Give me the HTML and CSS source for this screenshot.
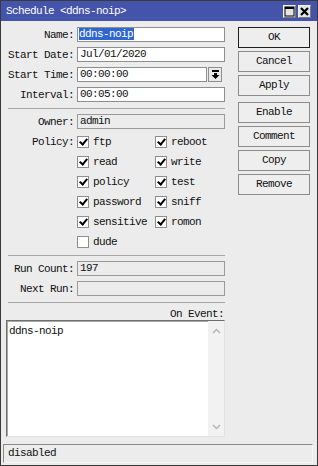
FILE: index.html
```html
<html>
    <head>
        <title>Schedule &lt;ddns-noip&gt;</title>
        <meta charset="UTF-8" />
        <link rel="stylesheet" href="styles.css">
    </head>
    <body>
        <div class="window">
            <div class="titlebar">
                <span class="title">Schedule &lt;ddns-noip&gt;</span>
                <span class="tbtn">
                    <svg width="11" height="11" viewBox="0 0 11 11">
                        <rect x="1" y="1" width="9" height="9" fill="none" stroke="#000" stroke-width="1"/>
                        <rect x="1" y="1" width="9" height="2" fill="#000"/>
                    </svg>
                </span>
                <span class="tbtn">
                    <svg width="11" height="11" viewBox="0 0 11 11">
                        <path d="M2 2 L9 9 M9 2 L2 9" stroke="#000" stroke-width="2.2"/>
                    </svg>
                </span>
            </div>

            <div class="content">
                <div class="form">
                    <div class="row">
                        <div class="label">Name:</div>
                        <div class="field"><span class="sel">ddns-noip</span></div>
                    </div>
                    <div class="row">
                        <div class="label">Start Date:</div>
                        <div class="field">Jul/01/2020</div>
                    </div>
                    <div class="row">
                        <div class="label">Start Time:</div>
                        <div class="field short">00:00:00</div>
                        <div class="drop">
                            <svg width="9" height="9" viewBox="0 0 9 9">
                                <rect x="1" y="0" width="7" height="2" fill="#000"/>
                                <rect x="3" y="3" width="3" height="2" fill="#000"/>
                                <polygon points="0.5,5 8.5,5 4.5,9" fill="#000"/>
                            </svg>
                        </div>
                    </div>
                    <div class="row">
                        <div class="label">Interval:</div>
                        <div class="field">00:05:00</div>
                    </div>

                    <div class="sep"></div>

                    <div class="row">
                        <div class="label">Owner:</div>
                        <div class="field ro">admin</div>
                    </div>
                    <div class="row policy">
                        <div class="label">Policy:</div>
                        <div class="checks">
                            <div class="check"><span class="box on"></span>ftp</div>
                            <div class="check"><span class="box on"></span>reboot</div>
                            <div class="check"><span class="box on"></span>read</div>
                            <div class="check"><span class="box on"></span>write</div>
                            <div class="check"><span class="box on"></span>policy</div>
                            <div class="check"><span class="box on"></span>test</div>
                            <div class="check"><span class="box on"></span>password</div>
                            <div class="check"><span class="box on"></span>sniff</div>
                            <div class="check"><span class="box on"></span>sensitive</div>
                            <div class="check"><span class="box on"></span>romon</div>
                            <div class="check"><span class="box"></span>dude</div>
                        </div>
                    </div>

                    <div class="sep sep-tight"></div>

                    <div class="row">
                        <div class="label">Run Count:</div>
                        <div class="field ro">197</div>
                    </div>
                    <div class="row">
                        <div class="label">Next Run:</div>
                        <div class="field ro"></div>
                    </div>

                    <div class="sep"></div>

                    <div class="event-label">On Event:</div>
                    <div class="script">
                        <div class="script-text">ddns-noip</div>
                        <div class="scroll">
                            <svg width="9" height="6" viewBox="0 0 9 6">
                                <path d="M1 5 L4.5 1.5 L8 5" fill="none" stroke="#b4b4b4" stroke-width="1.4"/>
                            </svg>
                            <svg width="9" height="6" viewBox="0 0 9 6">
                                <path d="M1 1 L4.5 4.5 L8 1" fill="none" stroke="#b4b4b4" stroke-width="1.4"/>
                            </svg>
                        </div>
                    </div>
                </div>

                <div class="buttons">
                    <div class="btn default">OK</div>
                    <div class="btn">Cancel</div>
                    <div class="btn">Apply</div>
                    <div class="btn group">Enable</div>
                    <div class="btn">Comment</div>
                    <div class="btn">Copy</div>
                    <div class="btn">Remove</div>
                </div>
            </div>

            <div class="status">disabled</div>
        </div>
    </body>
</html>
```

FILE: styles.css
```css
body {
    margin: 0;
    background: #ececec;
    font-family: "Liberation Mono", "DejaVu Sans Mono", monospace;
    font-size: 11px;
    letter-spacing: -0.6px;
    color: #111;
}

.window {
    width: 318px;
    height: 466px;
    box-sizing: border-box;
    border: 1px solid #3a3a3a;
    display: flex;
    flex-direction: column;
    background: #ececec;
}

/* Title bar */
.titlebar {
    height: 20px;
    flex: none;
    display: flex;
    align-items: center;
    gap: 2px;
    padding: 0 6px 0 5px;
    background: #4454aa;
    color: #fff;
}
.title {
    flex: 1;
    line-height: 20px;
}
.tbtn {
    width: 13px;
    height: 13px;
    box-sizing: border-box;
    display: flex;
    align-items: center;
    justify-content: center;
    background: #e4e4e4;
    border: 1px solid #f4f4f4;
    border-right-color: #7a7a7a;
    border-bottom-color: #7a7a7a;
}

/* Main area */
.content {
    flex: 1;
    display: flex;
    padding: 6px 0 7px 5px;
    min-height: 0;
}
.form {
    width: 219px;
    display: flex;
    flex-direction: column;
}
.row {
    display: flex;
    align-items: center;
    margin-bottom: 5px;
}
.label {
    width: 68px;
    flex: none;
    text-align: right;
    margin-right: 3px;
    white-space: nowrap;
}
.field {
    flex: 1;
    height: 15px;
    box-sizing: border-box;
    border: 1px solid #8e8e8e;
    background: #fff;
    padding-left: 2px;
    line-height: 13px;
    white-space: nowrap;
    overflow: hidden;
}
.field.short {
    flex: none;
    width: 130px;
}
.field.ro {
    background: #ececec;
    border-color: #9a9a9a;
}
.sel {
    background: #2f66d0;
    color: #fff;
    padding: 0 1px 0 0;
    margin-left: -1px;
}
.drop {
    width: 14px;
    height: 15px;
    box-sizing: border-box;
    margin-left: 1px;
    border: 1px solid #8e8e8e;
    background: #e8e8e8;
    display: flex;
    align-items: center;
    justify-content: center;
}

.sep {
    height: 1px;
    background: #a6a6a6;
    margin: 1px 0 5px 2px;
}
.sep-tight {
    margin-top: 3px;
}

/* Policy checkboxes */
.row.policy {
    align-items: flex-start;
    margin: -2px 0 0 0;
}
.row.policy .label {
    line-height: 20px;
}
.checks {
    display: grid;
    grid-template-columns: 78px auto;
    grid-auto-rows: 20px;
}
.check {
    display: flex;
    align-items: center;
    white-space: nowrap;
}
.box {
    width: 12px;
    height: 12px;
    box-sizing: border-box;
    border: 1px solid #8e8e8e;
    background: #fff;
    margin-right: 4px;
    position: relative;
}
.box.on::after {
    content: "";
    position: absolute;
    left: 3px;
    top: 0px;
    width: 3px;
    height: 6px;
    border-right: 2px solid #000;
    border-bottom: 2px solid #000;
    transform: rotate(40deg);
}

/* On event script */
.event-label {
    text-align: right;
    padding-right: 1px;
    line-height: 12px;
}
.script {
    flex: 1;
    display: flex;
    background: #fff;
    border: 1px solid #e2e2e2;
    border-top-color: #6e6e6e;
    border-left-color: #6e6e6e;
    box-shadow: inset 1px 1px 0 #a8a8a8;
}
.script-text {
    flex: 1;
    padding: 4px 2px;
    line-height: 12px;
}
.scroll {
    width: 16px;
    background: #f2f2f2;
    display: flex;
    flex-direction: column;
    justify-content: space-between;
    align-items: center;
    padding: 7px 0 6px 0;
}

/* Right button column */
.buttons {
    width: 72px;
    margin-left: 13px;
    display: flex;
    flex-direction: column;
    gap: 3px;
}
.btn {
    height: 21px;
    box-sizing: border-box;
    border: 1px solid #8c8c8c;
    background: #eeeeee;
    text-align: center;
    line-height: 19px;
}
.btn.default {
    border-color: #1e1e1e;
}
.btn.group {
    margin-top: 3px;
}

/* Status bar */
.status {
    flex: none;
    height: 19px;
    box-sizing: border-box;
    margin: 0 4px 2px 2px;
    border: 1px solid #f6f6f6;
    border-top-color: #8a8a8a;
    border-left-color: #8a8a8a;
    padding-left: 4px;
    line-height: 17px;
}
```
